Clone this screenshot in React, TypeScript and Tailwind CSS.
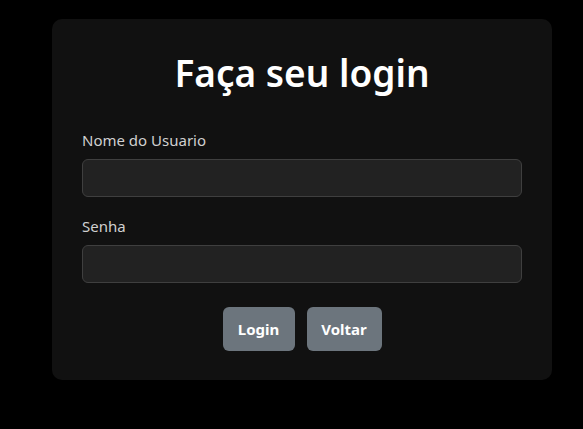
export default function App() {
  return (
    <div
      className="min-h-[429px] w-full bg-black pt-[19px]"
      style={{ fontFamily: '"Noto Sans", "Open Sans", sans-serif' }}
    >
      <div className="mx-[52px] w-[500px] rounded-[10px] bg-[#111111] px-[30px] pt-[30px] pb-[29px]">
        <h1 className="mb-[31px] text-center text-[37px] leading-[48px] font-semibold text-white">
          Faça seu login
        </h1>
        <form className="flex flex-col" onSubmit={(e) => e.preventDefault()}>
          <label className="mb-[7px] text-[15px] leading-6 text-[#d0d0d0]">Nome do Usuario</label>
          <input
            type="text"
            className="h-[38px] w-full rounded-[6px] border border-[#3f3f3f] bg-[#222222] px-3 text-white outline-none"
          />
          <label className="mt-[17px] mb-[7px] text-[15px] leading-6 text-[#d0d0d0]">Senha</label>
          <input
            type="password"
            className="h-[38px] w-full rounded-[6px] border border-[#3f3f3f] bg-[#222222] px-3 text-white outline-none"
          />
          <div className="mt-6 flex justify-center gap-3">
            <button
              type="submit"
              className="h-[44px] w-[72px] rounded-[6px] bg-[#6c757d] text-[15px] font-bold text-white"
            >
              Login
            </button>
            <button
              type="button"
              className="h-[44px] w-[75px] rounded-[6px] bg-[#6c757d] text-[15px] font-bold text-white"
            >
              Voltar
            </button>
          </div>
        </form>
      </div>
    </div>
  );
}
